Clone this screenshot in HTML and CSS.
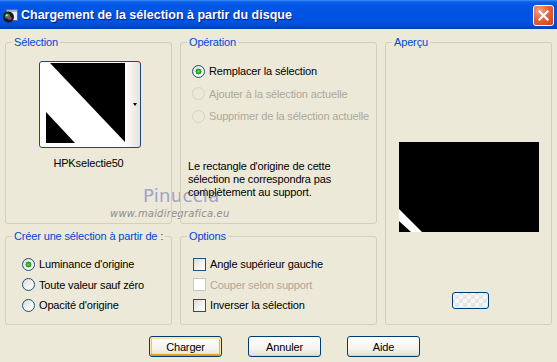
FILE: index.html
```html
<!DOCTYPE html>
<html lang="fr">

<head>
    <meta charset="UTF-8">
    <title>Chargement de la sélection à partir du disque</title>
    <link rel="stylesheet" href="styles.css">
</head>

<body>
    <div class="window">
        <div class="titlebar">
            <svg class="app-icon" width="16" height="16" viewBox="0 0 16 16">
                <rect x="4.5" y="1.5" width="11" height="11" fill="#e8eef8" stroke="#5a6a88"/>
                <rect x="5" y="2" width="10" height="2" fill="#9fb4d8"/>
                <circle cx="6.5" cy="9" r="5.5" fill="#1a1a1a"/>
                <circle cx="5.5" cy="8" r="2.6" fill="#3a8a5a"/>
                <circle cx="7.8" cy="10.2" r="1.8" fill="#b03a8a"/>
                <circle cx="4.8" cy="7.2" r="1" fill="#d8e86a"/>
            </svg>
            <span class="title">Chargement de la sélection à partir du disque</span>
            <span class="close">
                <svg width="11" height="11" viewBox="0 0 11 11">
                    <path d="M1.5 1.5 L9.5 9.5 M9.5 1.5 L1.5 9.5" stroke="#fff" stroke-width="2.2" stroke-linecap="square"/>
                </svg>
            </span>
        </div>

        <div class="watermark">
            <span class="wm-name">Pinuccia</span>
            <span class="wm-url">www.maidiregrafica.eu</span>
        </div>

        <div class="content">
            <fieldset class="group group-selection">
                <legend>Sélection</legend>
                <div class="thumb">
                    <svg width="79" height="80" viewBox="0 0 79 80">
                        <rect width="79" height="80" fill="#fff"/>
                        <polygon points="4,0 79,0 79,79" fill="#000"/>
                        <polygon points="0,49 29,80 0,80" fill="#000"/>
                    </svg>
                    <span class="arrow"></span>
                </div>
                <div class="thumb-name">HPKselectie50</div>
            </fieldset>

            <fieldset class="group group-operation">
                <legend>Opération</legend>
                <label class="row"><input type="radio" name="op" checked> Remplacer la sélection</label>
                <label class="row disabled"><input type="radio" name="op" disabled> Ajouter à la sélection actuelle</label>
                <label class="row disabled"><input type="radio" name="op" disabled> Supprimer de la sélection actuelle</label>
                <p class="note">Le rectangle d'origine de cette<br>sélection ne correspondra pas<br>complètement au support.</p>
            </fieldset>

            <fieldset class="group group-preview">
                <legend>Aperçu</legend>
                <svg class="preview" width="140" height="90" viewBox="0 0 140 90">
                    <rect width="140" height="90" fill="#000"/>
                    <polygon points="0,67 23,90 12,90 0,79" fill="#fff"/>
                </svg>
                <span class="bg-button"></span>
            </fieldset>

            <fieldset class="group group-source">
                <legend>Créer une sélection à partir de :</legend>
                <label class="row"><input type="radio" name="src" checked> Luminance d'origine</label>
                <label class="row"><input type="radio" name="src"> Toute valeur sauf zéro</label>
                <label class="row"><input type="radio" name="src"> Opacité d'origine</label>
            </fieldset>

            <fieldset class="group group-options">
                <legend>Options</legend>
                <label class="row"><input type="checkbox"> Angle supérieur gauche</label>
                <label class="row disabled"><input type="checkbox" disabled> Couper selon support</label>
                <label class="row"><input type="checkbox"> Inverser la sélection</label>
            </fieldset>
        </div>

        <div class="buttons">
            <button class="default">Charger</button>
            <button>Annuler</button>
            <button>Aide</button>
        </div>
    </div>
</body>

</html>
```

FILE: styles.css
```css
body {
    margin: 0;
    font-family: "Liberation Sans", Arial, sans-serif;
    font-size: 11px;
    letter-spacing: -0.15px;
    color: #000;
}

.window {
    position: relative;
    width: 557px;
    height: 362px;
    background-color: #ece9d8;
    overflow: hidden;
}

/* Titelbalk in XP-stijl */
.titlebar {
    display: flex;
    align-items: center;
    height: 29px;
    padding: 0 3px 0 2px;
    box-sizing: border-box;
    background: linear-gradient(to bottom, #3c8cf8 0, #0a5ee8 2px, #0056e6 5px, #0054e3 12px, #0052df 22px, #004bd4 26px, #003cb4 29px);
}

.app-icon {
    margin-top: 2px;
}

.title {
    flex: 1;
    margin-left: 3px;
    color: #fff;
    font-weight: bold;
    font-size: 12.5px;
    letter-spacing: 0;
    text-shadow: 1px 1px 0 #0a1e7a;
}

.close {
    display: flex;
    align-items: center;
    justify-content: center;
    width: 19px;
    height: 19px;
    margin-top: 1px;
    border: 1px solid #fff;
    border-radius: 3px;
    background: radial-gradient(circle at 30% 25%, #f2a486 0, #e4633e 45%, #c9431c 100%);
}

/* Groepen */
.content {
    position: relative;
    display: grid;
    grid-template-columns: 167px 197px 167px;
    grid-template-rows: 188px 95px;
    column-gap: 8px;
    row-gap: 6px;
    padding: 7px 0 0 5px;
}

.group {
    margin: 0;
    padding: 0;
    min-width: 0;
    border: 1px solid #d0d0bf;
    border-radius: 3px;
    display: flex;
    flex-direction: column;
}

.group legend {
    margin-left: 6px;
    padding: 0 2px;
    color: #0046d5;
    line-height: 13px;
}

.group-preview {
    grid-column: 3;
    grid-row: 1 / span 2;
    align-items: center;
}

.group-selection {
    align-items: flex-start;
}

.thumb {
    display: flex;
    align-items: center;
    width: 102px;
    height: 87px;
    box-sizing: border-box;
    margin: 12px 0 0 33px;
    padding: 0 0 0 6px;
    border: 1px solid #1c4a80;
    border-radius: 3px;
    background: linear-gradient(to right, #fff 0, #fff 84px, #f6f5f0 90px, #e4e2d9 100px);
}

.thumb svg {
    align-self: flex-start;
    margin-top: 1px;
}

.arrow {
    margin-left: 8px;
    border-top: 3px solid #000;
    border-left: 2.5px solid transparent;
    border-right: 2.5px solid transparent;
}

.thumb-name {
    width: 165px;
    margin-top: 9px;
    text-align: center;
}

.row {
    display: flex;
    align-items: center;
    height: 22.5px;
    gap: 4px;
    white-space: nowrap;
}

.row.disabled {
    color: #aca899;
}

.group-operation .row {
    padding-left: 11px;
}

.group-operation .row:first-of-type {
    margin-top: 11px;
}

.note {
    margin: 32px 0 0 7px;
    line-height: 13px;
}

.group-source .row {
    padding-left: 16px;
    height: 20.5px;
}

.group-source .row:first-of-type,
.group-options .row:first-of-type {
    margin-top: 11px;
}

.group-options .row {
    padding-left: 12px;
    height: 20.5px;
}

input[type="radio"],
input[type="checkbox"] {
    appearance: none;
    -webkit-appearance: none;
    flex: none;
    width: 13px;
    height: 13px;
    margin: 0;
    border: 1px solid #1c5180;
    background: linear-gradient(135deg, #dcdcd7 0, #f4f4f0 60%, #fff 100%);
}

input[type="radio"] {
    border-radius: 50%;
}

input[type="radio"]:checked {
    background: radial-gradient(circle at 50% 50%, #6ee06e 0, #21a121 2px, #1e8c1e 2.7px, transparent 3.2px),
        linear-gradient(135deg, #dcdcd7 0, #f4f4f0 60%, #fff 100%);
}

input:disabled {
    border-color: #cac8bb;
    background: #fff;
}

input[type="radio"]:disabled {
    background: transparent;
    border-color: #d6d3c6;
}

.preview {
    margin-top: 93px;
}

.bg-button {
    width: 37px;
    height: 17px;
    box-sizing: border-box;
    margin: 60px 0 0 4px;
    border: 1px solid #003c74;
    border-radius: 3px;
    background: repeating-conic-gradient(#f6f6f6 0 25%, #e4e4e4 0 50%) 2px 2px / 8px 8px;
}

/* Knoppen onderaan */
.buttons {
    display: flex;
    gap: 26px;
    padding: 11px 0 0 149px;
}

button {
    width: 73px;
    height: 21px;
    padding: 0;
    font-family: inherit;
    font-size: 11px;
    letter-spacing: inherit;
    color: #000;
    border: 1px solid #003c74;
    border-radius: 3px;
    background: linear-gradient(to bottom, #fff 0, #f5f4ef 60%, #e8e6dc 90%, #d6d0c5 100%);
}

button.default {
    box-shadow: inset 0 1px 0 1px #ffe8a6, inset 0 -1px 0 1px #e5a01a, inset 1px 0 0 1px #f8c05a, inset -1px 0 0 1px #f0b040;
}

/* Watermerk, ligt onder de tekst van de groepen */
.watermark {
    position: absolute;
    left: 110px;
    top: 185px;
    display: flex;
    flex-direction: column;
    align-items: flex-start;
}

.wm-name {
    margin-left: 33px;
    font-family: "DejaVu Sans", sans-serif;
    font-size: 18px;
    letter-spacing: 0.3px;
    color: #a2a2c8;
    line-height: 21px;
}

.wm-url {
    margin-top: 2px;
    font-family: "DejaVu Sans", sans-serif;
    font-style: italic;
    font-size: 10px;
    letter-spacing: 0.2px;
    color: #8e8e8e;
    line-height: 12px;
}
```
